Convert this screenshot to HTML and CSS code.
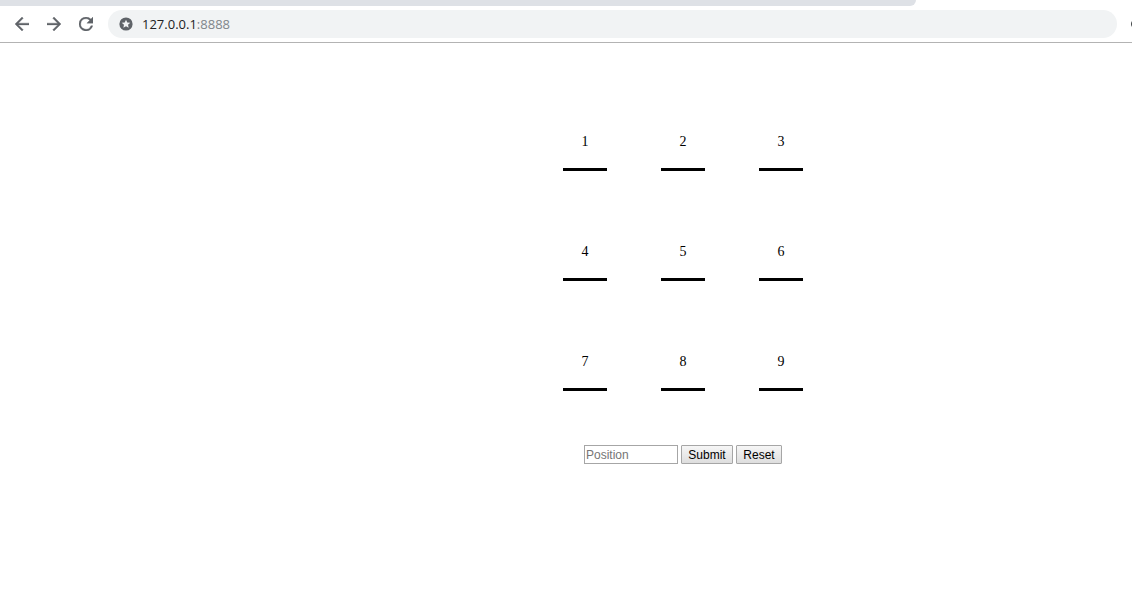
FILE: index.html
```html
<!DOCTYPE html>
<html lang="en">
<head>
<meta charset="utf-8">
<title>127.0.0.1:8888</title>
<link rel="stylesheet" href="styles.css">
</head>
<body>
<header class="browser">
  <div class="tabstrip"></div>
  <div class="toolbar">
    <nav class="nav">
      <button class="nav-button" type="button" aria-label="Back"><svg viewBox="4 4 16 16"><path d="M20 11H7.83l5.59-5.59L12 4l-8 8 8 8 1.41-1.41L7.83 13H20z"/></svg></button>
      <button class="nav-button" type="button" aria-label="Forward"><svg viewBox="4 4 16 16"><path d="M12 4l-1.41 1.41L16.17 11H4v2h12.17l-5.58 5.59L12 20l8-8z"/></svg></button>
      <button class="nav-button" type="button" aria-label="Reload"><svg viewBox="4 4 16 16"><path d="M17.65 6.35A7.96 7.96 0 0 0 12 4a8 8 0 1 0 7.73 10h-2.08A6 6 0 1 1 12 6c1.66 0 3.14.69 4.22 1.78L13 11h7V4z"/></svg></button>
    </nav>
    <div class="address">
      <svg class="site-icon" viewBox="0 0 14 14" aria-hidden="true"><circle cx="7" cy="7" r="6.6"/><path d="M7 2.7l1.25 2.8 3.05.3-2.3 2.05.68 3L7 9.3l-2.68 1.55.68-3L2.7 5.8l3.05-.3z"/></svg>
      <span class="url">127.0.0.1<span class="port">:8888</span></span>
    </div>
    <svg class="edge-icon" viewBox="0 0 14 14" aria-hidden="true"><circle cx="7" cy="7" r="7"/></svg>
  </div>
</header>
<main class="page">
  <div class="board">
    <div class="cell">1</div><div class="cell">2</div><div class="cell">3</div>
    <div class="cell">4</div><div class="cell">5</div><div class="cell">6</div>
    <div class="cell">7</div><div class="cell">8</div><div class="cell">9</div>
  </div>
  <form class="move">
    <input class="position" type="text" placeholder="Position" aria-label="Position">
    <button class="action submit" type="submit">Submit</button>
    <button class="action reset" type="reset">Reset</button>
  </form>
</main>
</body>
</html>
```
FILE: styles.css
```css
* { box-sizing: border-box; }

body {
  margin: 0;
  background: #fff;
  color: #000;
  font-family: "Liberation Serif", "Times New Roman", serif;
  overflow-x: hidden;
}

.browser { border-bottom: 1px solid #b3b3b3; }

.tabstrip {
  height: 6px;
  margin-right: 216px;
  background: #dee1e6;
  border-bottom-right-radius: 6px;
}

.toolbar {
  display: flex;
  align-items: center;
  padding: 4px 0 4px 14px;
  overflow: hidden;
}

.nav {
  display: flex;
  gap: 16px;
  margin-right: 14px;
}

.nav-button {
  display: flex;
  padding: 1px;
  border: 0;
  background: none;
}

.nav-button svg {
  width: 14px;
  height: 14px;
  fill: #5f6368;
  stroke: #5f6368;
  stroke-width: 0.4;
}

.address {
  flex: 1;
  display: flex;
  align-items: center;
  gap: 9px;
  height: 28px;
  padding-left: 11px;
  border-radius: 14px;
  background: #f1f3f4;
  font: 13px/20px "Open Sans", "Noto Sans", sans-serif;
}

.site-icon {
  width: 14px;
  height: 14px;
  fill: #5f6368;
}

.site-icon path { fill: #f1f3f4; }

.url { color: #202124; }

.port { color: #80868b; }

.edge-icon {
  flex: none;
  width: 10px;
  height: 10px;
  margin-left: 14px;
  margin-right: -9px;
  fill: #3c4043;
}

.page {
  display: flex;
  flex-direction: column;
  align-items: center;
  padding: 84px 0 0 234px;
}

.board {
  display: grid;
  grid-template-columns: repeat(3, 44px);
  column-gap: 54px;
  row-gap: 66px;
}

.cell {
  height: 44px;
  border-bottom: 3px solid #000;
  font-size: 14px;
  line-height: 30px;
  text-align: center;
}

.move {
  display: flex;
  gap: 3px;
  margin-top: 54px;
}

.position,
.action {
  height: 19px;
  margin: 0;
  border: 1px solid #a6a6a6;
  font: 12px/15px "Liberation Sans", Arial, sans-serif;
}

.position {
  width: 94px;
  padding: 1px;
}

.position::placeholder { color: #757575; }

.action {
  padding: 2px 6px 0;
  border-radius: 1px;
  background: linear-gradient(#f6f6f6, #dedede);
  color: #000;
}

.submit { width: 52px; }

.reset { width: 46px; }
```
